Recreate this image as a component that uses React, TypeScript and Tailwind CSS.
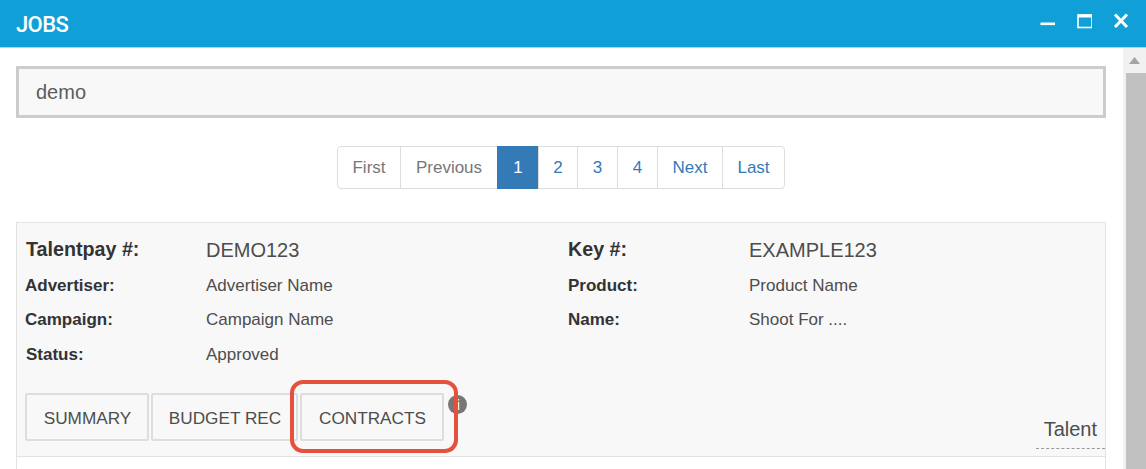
const F = "font-['Liberation_Sans',Arial,sans-serif]";

function Page({ label, w, active, muted, first, last }: { label: string; w: string; active?: boolean; muted?: boolean; first?: boolean; last?: boolean }) {
  const color = active ? "bg-[#337ab7] text-white border-[#337ab7]" : muted ? "bg-white text-[#777777] border-[#dddddd]" : "bg-white text-[#337ab7] border-[#dddddd]";
  return (
    <div className={`${w} h-[43px] flex items-center justify-center text-[17px] border ${color} -ml-px ${first ? "rounded-l ml-0" : ""} ${last ? "rounded-r" : ""}`}>
      {label}
    </div>
  );
}

function Info({ k, v, big, indent }: { k: string; v: string; big?: boolean; indent?: boolean }) {
  return (
    <div className={`flex items-center ${big ? "h-[35.5px]" : "h-[34.5px]"}`}>
      <div className={`w-[181px] font-bold text-[#333333] ${indent ? "pl-px" : ""} ${big ? "text-[19.7px]" : "text-[17px]"}`}>{k}</div>
      <div className={`text-[#4d4d4d] ${big ? "text-[20px]" : "text-[17px]"}`}>{v}</div>
    </div>
  );
}

function Tab({ label, w }: { label: string; w: string }) {
  return (
    <div className={`${w} h-[48px] flex items-center justify-center pt-[3px] pl-px bg-[#f8f8f8] border-2 border-[#dddddd] rounded-[2px] text-[17.2px] text-[#4d4d4d]`}>
      {label}
    </div>
  );
}

export default function App() {
  return (
    <div className={`${F} w-[1146px] h-[469px] overflow-hidden bg-white flex flex-col`}>
      <header className="h-[48px] shrink-0 bg-[#119fd8] border-b border-[#c4ccd0] flex items-center justify-between pl-4 pr-[17px]">
        <div className="font-['Roboto',sans-serif] font-medium text-[22px] text-white tracking-[-0.6px] pt-0.5">JOBS</div>
        <div className="flex items-center gap-[21px] mb-[5px]">
          <svg width="16" height="16" viewBox="0 0 16 16"><rect x="1.5" y="9.5" width="15" height="2.6" fill="#fff" /></svg>
          <svg width="16" height="16" viewBox="0 0 16 16" fill="none"><rect x="2" y="2" width="14" height="12.5" stroke="#fff" strokeWidth="1.6" /><rect x="2" y="1.5" width="14" height="3" fill="#fff" /></svg>
          <svg width="16" height="16" viewBox="0 0 16 16" fill="none"><path d="M2 1.5 L14 14 M14 1.5 L2 14" stroke="#fff" strokeWidth="3" /></svg>
        </div>
      </header>
      <div className="flex flex-1 min-h-0">
        <main className="flex-1 min-w-0 pl-4 pr-[17px] pt-[18px]">
          <div className="h-[52px] bg-[#f8f8f8] border-[3px] border-[#cccccc] flex items-center pl-[17px] text-[20px] text-[#5c5c5c]">demo</div>
          <nav className="flex justify-center mt-[28px]">
            <Page label="First" w="w-[64px]" muted first />
            <Page label="Previous" w="w-[98px]" muted />
            <Page label="1" w="w-[42px]" active />
            <Page label="2" w="w-[40px]" />
            <Page label="3" w="w-[41px]" />
            <Page label="4" w="w-[41px]" />
            <Page label="Next" w="w-[66px]" />
            <Page label="Last" w="w-[63px]" last />
          </nav>
          <section className="relative mt-[33px] bg-[#f8f8f8] border border-[#e3e3e3] pt-[9.5px]">
            <div className="grid grid-cols-[543px_1fr] pl-2">
              <div>
                <Info k="Talentpay #:" v="DEMO123" big indent />
                <Info k="Advertiser:" v="Advertiser Name" />
                <Info k="Campaign:" v="Campaign Name" />
                <Info k="Status:" v="Approved" indent />
              </div>
              <div>
                <Info k="Key #:" v="EXAMPLE123" big />
                <Info k="Product:" v="Product Name" />
                <Info k="Name:" v="Shoot For ...." />
              </div>
            </div>
            <div className="flex items-start justify-between mt-[21.5px] pl-2 h-[64px] border-b border-[#e3e3e3]">
              <div className="flex gap-0.5 relative">
                <Tab label="SUMMARY" w="w-[124px]" />
                <Tab label="BUDGET REC" w="w-[147px]" />
                <Tab label="CONTRACTS" w="w-[144px]" />
                <div className="absolute left-[423px] top-[2px] w-[19px] h-[19px] rounded-full bg-[#777777] text-white text-[14px] font-bold flex items-center justify-center pl-px leading-none">i</div>
                <div className="absolute left-[265px] top-[-13px] w-[168px] h-[73px] border-4 border-[#e5513c] rounded-[13px]" />
              </div>
              <div className="w-[69px] h-[56px] flex items-end justify-end pr-2 pb-[2px] border-b border-dashed border-[#999999] text-[20px] text-[#4d4d4d] leading-[34px]">
                <span>Talent</span>
              </div>
            </div>
            <div className="h-4 bg-white" />
          </section>
        </main>
        <aside className="w-[23px] shrink-0 flex flex-col">
          <div className="h-[25px] bg-[#f1f1f1] flex items-center justify-center">
            <svg width="11" height="7" viewBox="0 0 11 7"><path d="M5.5 0 L11 7 L0 7 Z" fill="#a3a3a3" /></svg>
          </div>
          <div className="flex-1 flex bg-[#f1f1f1]"><div className="ml-[3px] w-[20px] bg-[#c1c1c1]" /></div>
        </aside>
      </div>
    </div>
  );
}
